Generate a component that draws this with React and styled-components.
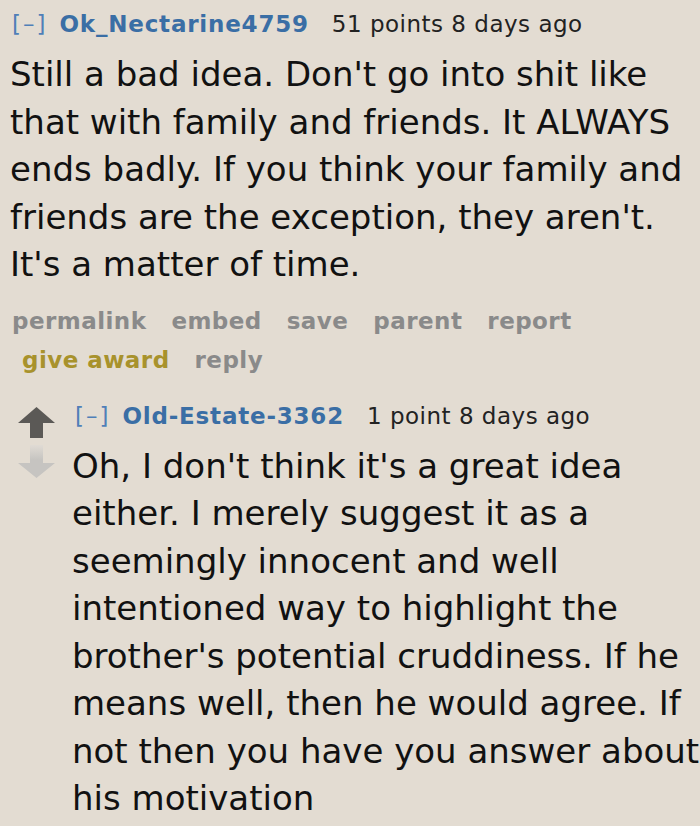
import React from 'react';
import styled, { createGlobalStyle } from 'styled-components';

const GlobalStyle = createGlobalStyle`
  html, body {
    margin: 0;
    padding: 0;
    background: #e3dcd2;
  }
  body {
    font-family: "DejaVu Sans", Verdana, sans-serif;
  }
`;

const Page = styled.div`
  width: 700px;
  height: 826px;
  overflow: hidden;
  background: #e3dcd2;
  padding: 8px 0 0 10px;
  box-sizing: border-box;
`;

const Comment = styled.div`
  display: flex;
  flex-direction: column;
`;

const Tagline = styled.div`
  display: flex;
  align-items: baseline;
  font-size: 23px;
  letter-spacing: 0.5px;
  line-height: 32px;
  color: #222;
  white-space: nowrap;
  padding-left: ${p => (p.$nested ? '3px' : '2px')};
`;

const Expand = styled.span`
  color: #4f7fb8;
  letter-spacing: 2px;
  margin-right: 12px;
`;

const Author = styled.span`
  color: #3a6ea5;
  font-weight: bold;
  letter-spacing: 0.8px;
  margin-right: 23px;
`;

const Body = styled.div`
  font-size: 34px;
  line-height: 47.5px;
  color: #111;
  margin-top: 11px;
`;

const Buttons = styled.div`
  display: flex;
  flex-wrap: wrap;
  row-gap: 4px;
  column-gap: 25px;
  font-size: 23px;
  letter-spacing: 0.45px;
  font-weight: bold;
  line-height: 35px;
  margin-top: 15px;
  padding-left: 2px;
  padding-right: 100px;
`;

const Action = styled.span`
  color: ${p => (p.$award ? '#a8922c' : '#8a8a8a')};
  margin-left: ${p => (p.$indent ? '10px' : '0')};
`;

const Child = styled.div`
  display: flex;
  margin-top: 22px;
  margin-left: 8px;
`;

const Votes = styled.div`
  display: flex;
  flex-direction: column;
  align-items: center;
  width: 37px;
  margin-right: 17px;
  padding-top: 7px;
  gap: 7px;
`;

const UpArrow = () => (
  <svg width="37" height="31" viewBox="0 0 37 31">
    <path d="M18.5 0 L37 16 L25 16 L25 31 L12 31 L12 16 L0 16 Z" fill="#5b5956" />
  </svg>
);

const DownArrow = () => (
  <svg width="37" height="33" viewBox="0 0 37 33">
    <defs>
      <linearGradient id="dg" x1="0" y1="0" x2="0" y2="1">
        <stop offset="0" stopColor="#e0dbd4" />
        <stop offset="0.45" stopColor="#c6c4c1" />
        <stop offset="1" stopColor="#c6c4c1" />
      </linearGradient>
    </defs>
    <path d="M12 0 L25 0 L25 18 L37 18 L18.5 33 L0 18 L12 18 Z" fill="url(#dg)" />
  </svg>
);

const ChildContent = styled.div`
  display: flex;
  flex-direction: column;
  flex: 1;
`;

export default function App() {
  return (
    <>
      <GlobalStyle />
      <Page>
        <Comment>
          <Tagline>
            <Expand>[–]</Expand>
            <Author>Ok_Nectarine4759</Author>
            <span>51 points 8 days ago</span>
          </Tagline>
          <Body>
            Still a bad idea. Don't go into shit like that with family and friends. It ALWAYS
            ends badly. If you think your family and friends are the exception, they aren't.
            It's a matter of time.
          </Body>
          <Buttons>
            <Action>permalink</Action>
            <Action>embed</Action>
            <Action>save</Action>
            <Action>parent</Action>
            <Action>report</Action>
            <Action $award $indent>give award</Action>
            <Action>reply</Action>
          </Buttons>
        </Comment>
        <Child>
          <Votes>
            <UpArrow />
            <DownArrow />
          </Votes>
          <ChildContent>
            <Tagline $nested>
              <Expand>[–]</Expand>
              <Author>Old-Estate-3362</Author>
              <span>1 point 8 days ago</span>
            </Tagline>
            <Body>
              Oh, I don't think it's a great idea either. I merely suggest it as a seemingly
              innocent and well intentioned way to highlight the brother's potential cruddiness.
              If he means well, then he would agree. If not then you have you answer about his
              motivation
            </Body>
          </ChildContent>
        </Child>
      </Page>
    </>
  );
}
